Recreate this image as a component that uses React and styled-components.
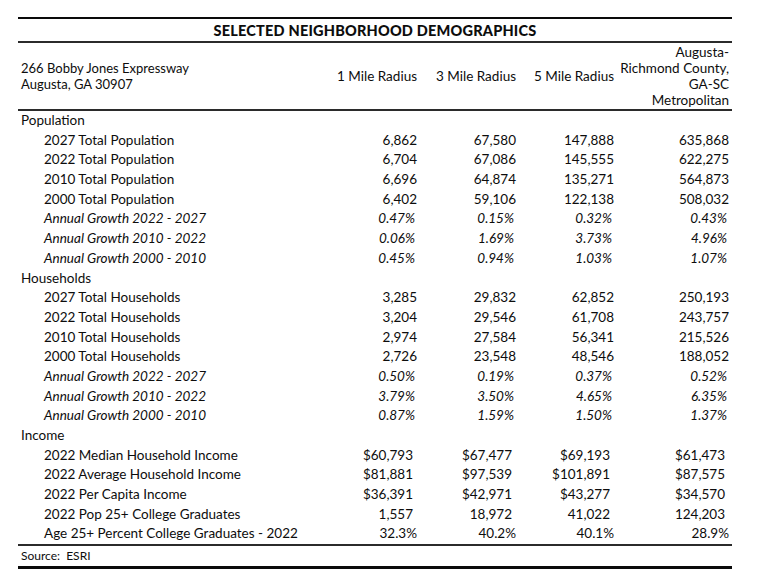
import React from 'react';
import styled, { createGlobalStyle } from 'styled-components';

const GlobalStyle = createGlobalStyle`
  html, body {
    margin: 0;
    padding: 0;
    background: #fff;
  }
  body {
    font-family: Lato, "Noto Sans", "DejaVu Sans", sans-serif;
    color: #0d0d0d;
  }
`;

const COLUMNS = '304px 98px 99px 98px 115px';

const sections = [
  {
    name: 'Population',
    rows: [
      { label: '2027 Total Population', values: ['6,862', '67,580', '147,888', '635,868'] },
      { label: '2022 Total Population', values: ['6,704', '67,086', '145,555', '622,275'] },
      { label: '2010 Total Population', values: ['6,696', '64,874', '135,271', '564,873'] },
      { label: '2000 Total Population', values: ['6,402', '59,106', '122,138', '508,032'] },
      { label: 'Annual Growth 2022 - 2027', values: ['0.47%', '0.15%', '0.32%', '0.43%'], growth: true },
      { label: 'Annual Growth 2010 - 2022', values: ['0.06%', '1.69%', '3.73%', '4.96%'], growth: true },
      { label: 'Annual Growth 2000 - 2010', values: ['0.45%', '0.94%', '1.03%', '1.07%'], growth: true },
    ],
  },
  {
    name: 'Households',
    rows: [
      { label: '2027 Total Households', values: ['3,285', '29,832', '62,852', '250,193'] },
      { label: '2022 Total Households', values: ['3,204', '29,546', '61,708', '243,757'] },
      { label: '2010 Total Households', values: ['2,974', '27,584', '56,341', '215,526'] },
      { label: '2000 Total Households', values: ['2,726', '23,548', '48,546', '188,052'] },
      { label: 'Annual Growth 2022 - 2027', values: ['0.50%', '0.19%', '0.37%', '0.52%'], growth: true },
      { label: 'Annual Growth 2010 - 2022', values: ['3.79%', '3.50%', '4.65%', '6.35%'], growth: true },
      { label: 'Annual Growth 2000 - 2010', values: ['0.87%', '1.59%', '1.50%', '1.37%'], growth: true },
    ],
  },
  {
    name: 'Income',
    rows: [
      { label: '2022 Median Household Income', values: ['$60,793', '$67,477', '$69,193', '$61,473'], inset: 4 },
      { label: '2022 Average Household Income', values: ['$81,881', '$97,539', '$101,891', '$87,575'], inset: 4 },
      { label: '2022 Per Capita Income', values: ['$36,391', '$42,971', '$43,277', '$34,570'], inset: 4 },
      { label: '2022 Pop 25+ College Graduates', values: ['1,557', '18,972', '41,022', '124,203'], inset: 4 },
      { label: 'Age 25+ Percent College Graduates - 2022', values: ['32.3%', '40.2%', '40.1%', '28.9%'] },
    ],
  },
];

const Demographics = () => {
  return (
    <>
      <GlobalStyle />
      <Page>
        <Title>SELECTED NEIGHBORHOOD DEMOGRAPHICS</Title>
        <HeaderRow>
          <Address>
            266 Bobby Jones Expressway
            <br />
            Augusta, GA 30907
          </Address>
          <HeadCell>1 Mile Radius</HeadCell>
          <HeadCell>3 Mile Radius</HeadCell>
          <HeadCell>5 Mile Radius</HeadCell>
          <HeadCell>
            Augusta-
            <br />
            Richmond County,
            <br />
            GA-SC
            <br />
            Metropolitan
          </HeadCell>
        </HeaderRow>
        <Body>
          {sections.map((section) => (
            <React.Fragment key={section.name}>
              <SectionLabel>{section.name}</SectionLabel>
              {section.rows.map((row) => (
                <Row key={section.name + row.label} $italic={row.growth}>
                  <Label>{row.label}</Label>
                  {row.values.map((v, i) => (
                    <Value key={i} $inset={row.inset || (row.growth ? 2 : 0)}>
                      {v}
                    </Value>
                  ))}
                </Row>
              ))}
            </React.Fragment>
          ))}
        </Body>
        <Source>Source:&nbsp;&nbsp;ESRI</Source>
      </Page>
    </>
  );
};

export default Demographics;

const Page = styled.div`
  width: 714px;
  padding: 17px 0 0 18px;
  font-size: 13.5px;
`;

const Title = styled.div`
  border-top: 2px solid #0a0a0a;
  border-bottom: 2px solid #2b2b2b;
  height: 22px;
  display: flex;
  align-items: center;
  justify-content: center;
  font-weight: 900;
  font-size: 14.5px;
  letter-spacing: 0.2px;
`;

const HeaderRow = styled.div`
  display: grid;
  grid-template-columns: ${COLUMNS};
  align-items: center;
  height: 66px;
  border-bottom: 2px solid #2b2b2b;
  line-height: 16px;
`;

const Address = styled.div`
  padding-left: 3px;
  font-size: 13px;
`;

const HeadCell = styled.div`
  text-align: right;
  padding-right: 3px;
`;

const Body = styled.div`
  display: flex;
  flex-direction: column;
`;

const SectionLabel = styled.div`
  height: 19.7px;
  line-height: 19.7px;
  padding-left: 3px;
`;

const Row = styled.div`
  display: grid;
  grid-template-columns: ${COLUMNS};
  height: 19.7px;
  line-height: 19.7px;
  font-style: ${(p) => (p.$italic ? 'italic' : 'normal')};
`;

const Label = styled.div`
  padding-left: 26px;
  white-space: nowrap;
`;

const Value = styled.div`
  text-align: right;
  padding-right: ${(p) => 3 + p.$inset}px;
`;

const Source = styled.div`
  border-top: 2px solid #2b2b2b;
  border-bottom: 3px solid #0a0a0a;
  height: 20px;
  line-height: 20px;
  padding-left: 3px;
  font-size: 12px;
`;
